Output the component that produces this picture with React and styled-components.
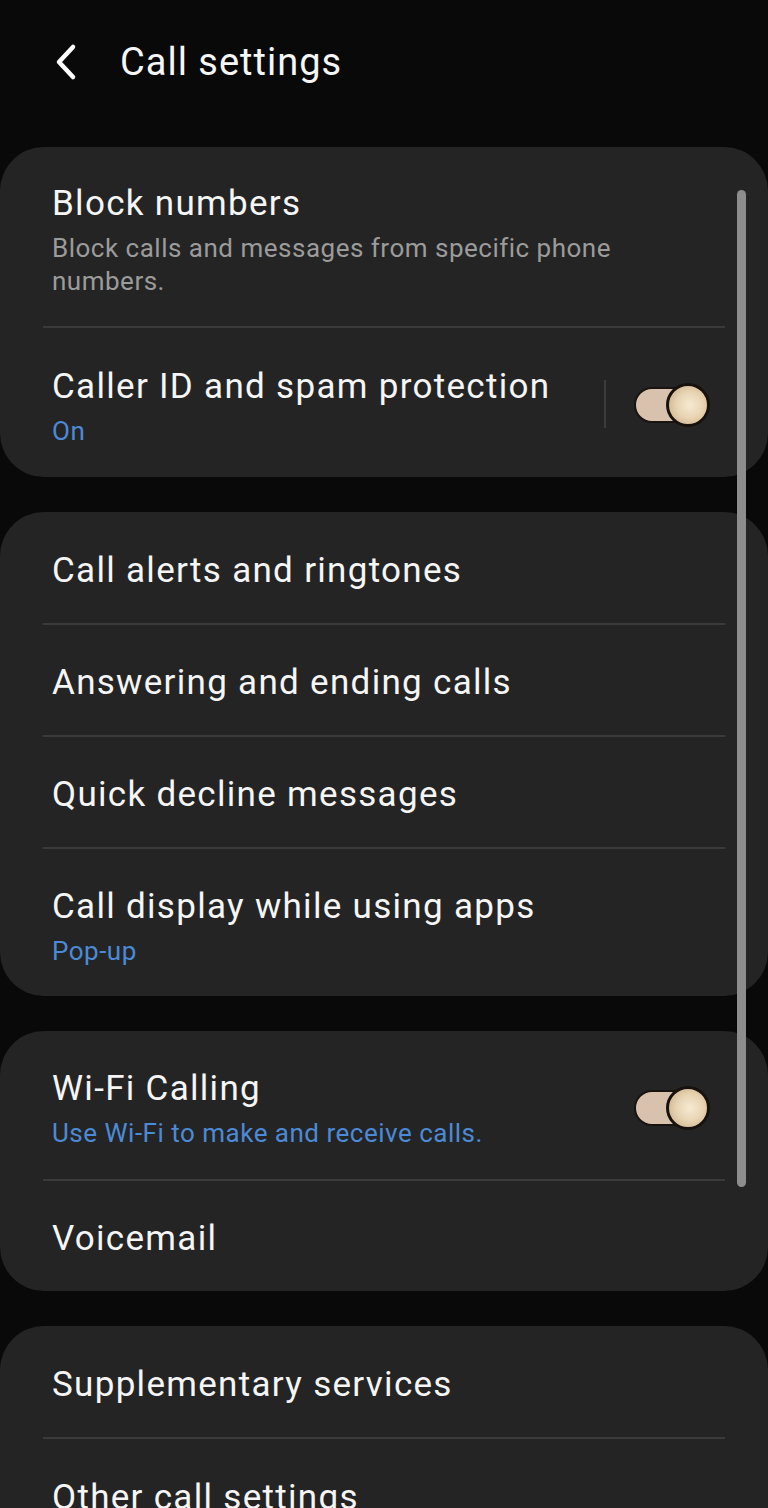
import React from "react";
import styled, { createGlobalStyle } from "styled-components";

const GlobalStyle = createGlobalStyle`
  html, body {
    margin: 0;
    padding: 0;
    background: #090909;
  }
  body {
    font-family: Roboto, "Noto Sans", sans-serif;
    -webkit-font-smoothing: antialiased;
  }
`;

const Screen = styled.div`
  position: relative;
  width: 768px;
  height: 1508px;
  overflow: hidden;
  background: #090909;
  color: #f4f4f4;
`;

const Header = styled.header`
  display: flex;
  align-items: center;
  gap: 38px;
  height: 124px;
  padding: 0 0 0 50px;
`;

const BackButton = styled.button`
  display: flex;
  align-items: center;
  justify-content: center;
  width: 32px;
  height: 44px;
  padding: 0;
  border: none;
  background: none;
  color: #fff;
`;

const HeaderTitle = styled.h1`
  margin: 0;
  font-size: 38px;
  font-weight: 400;
  letter-spacing: 1px;
  color: #f6f6f6;
`;

const List = styled.div`
  display: flex;
  flex-direction: column;
  gap: 35px;
  padding-top: 23px;
`;

const Card = styled.section`
  background: #242424;
  border-radius: 44px;
`;

const Row = styled.div`
  display: flex;
  align-items: center;
  min-height: ${(p) => p.$height}px;
  box-sizing: border-box;
  border-bottom: ${(p) => (p.$last ? "none" : "2px solid #3a3a3a")};
  margin: 0 43px;
  padding: ${(p) => p.$shift}px 15px 0 9px;
`;

const RowText = styled.div`
  display: flex;
  flex-direction: column;
  flex: 1;
  gap: 8px;
`;

const Title = styled.div`
  font-size: 35px;
  line-height: 40px;
  letter-spacing: 1.3px;
  color: #f5f5f5;
`;

const Subtitle = styled.div`
  font-size: 26px;
  line-height: 33px;
  letter-spacing: 0.5px;
  color: ${(p) => (p.$accent ? "#4c8ad5" : "#9b9b9b")};
  padding-right: 90px;
`;

const Separator = styled.div`
  width: 2px;
  height: 48px;
  margin: 0 28px 6px 0;
  background: #3c3c3c;
`;

const Toggle = styled.div`
  position: relative;
  width: 76px;
  height: 44px;
  display: flex;
  align-items: center;
  margin-bottom: 4px;
`;

const Track = styled.div`
  width: 58px;
  height: 36px;
  border-radius: 18px;
  background: #d8c2ae;
  border: 2px solid #1a1410;
  box-sizing: border-box;
`;

const Thumb = styled.div`
  position: absolute;
  right: 0;
  top: 0;
  width: 44px;
  height: 44px;
  border-radius: 50%;
  box-sizing: border-box;
  border: 3px solid #17120e;
  background: radial-gradient(circle at 55% 50%, #f6e9d2 0%, #e9d5b5 45%, #c4a77e 100%);
`;

const ScrollBar = styled.div`
  position: absolute;
  left: 737px;
  top: 190px;
  width: 9px;
  height: 997px;
  border-radius: 5px;
  background: #8d8d8d;
`;

const ChevronLeft = () => (
  <svg width="26" height="38" viewBox="0 0 26 38" fill="none">
    <path
      d="M20 4 L6 19 L20 34"
      stroke="#fff"
      strokeWidth="4.5"
      strokeLinecap="round"
      strokeLinejoin="round"
    />
  </svg>
);

const Switch = () => (
  <Toggle>
    <Track />
    <Thumb />
  </Toggle>
);

const SettingRow = ({ title, sub, accent, height = 112, shift = 6, last, separator, toggle }) => (
  <Row $height={height} $last={last} $shift={shift}>
    <RowText>
      <Title>{title}</Title>
      {sub && <Subtitle $accent={accent}>{sub}</Subtitle>}
    </RowText>
    {separator && <Separator />}
    {toggle && <Switch />}
  </Row>
);

export default function App() {
  return (
    <Screen>
      <GlobalStyle />
      <Header>
        <BackButton aria-label="Back">
          <ChevronLeft />
        </BackButton>
        <HeaderTitle>Call settings</HeaderTitle>
      </Header>

      <List>
        <Card>
          <SettingRow
            title="Block numbers"
            sub="Block calls and messages from specific phone numbers."
            height={181}
            shift={8}
          />
          <SettingRow
            title="Caller ID and spam protection"
            sub="On"
            accent
            height={149}
            shift={9}
            separator
            toggle
            last
          />
        </Card>

        <Card>
          <SettingRow title="Call alerts and ringtones" height={113} />
          <SettingRow title="Answering and ending calls" height={112} />
          <SettingRow title="Quick decline messages" height={112} />
          <SettingRow
            title="Call display while using apps"
            sub="Pop-up"
            accent
            height={147}
            shift={9}
            last
          />
        </Card>

        <Card>
          <SettingRow
            title="Wi-Fi Calling"
            sub="Use Wi-Fi to make and receive calls."
            accent
            height={150}
            shift={9}
            toggle
          />
          <SettingRow title="Voicemail" height={110} last />
        </Card>

        <Card>
          <SettingRow title="Supplementary services" height={113} />
          <SettingRow title="Other call settings" height={112} last />
        </Card>
      </List>

      <ScrollBar />
    </Screen>
  );
}
